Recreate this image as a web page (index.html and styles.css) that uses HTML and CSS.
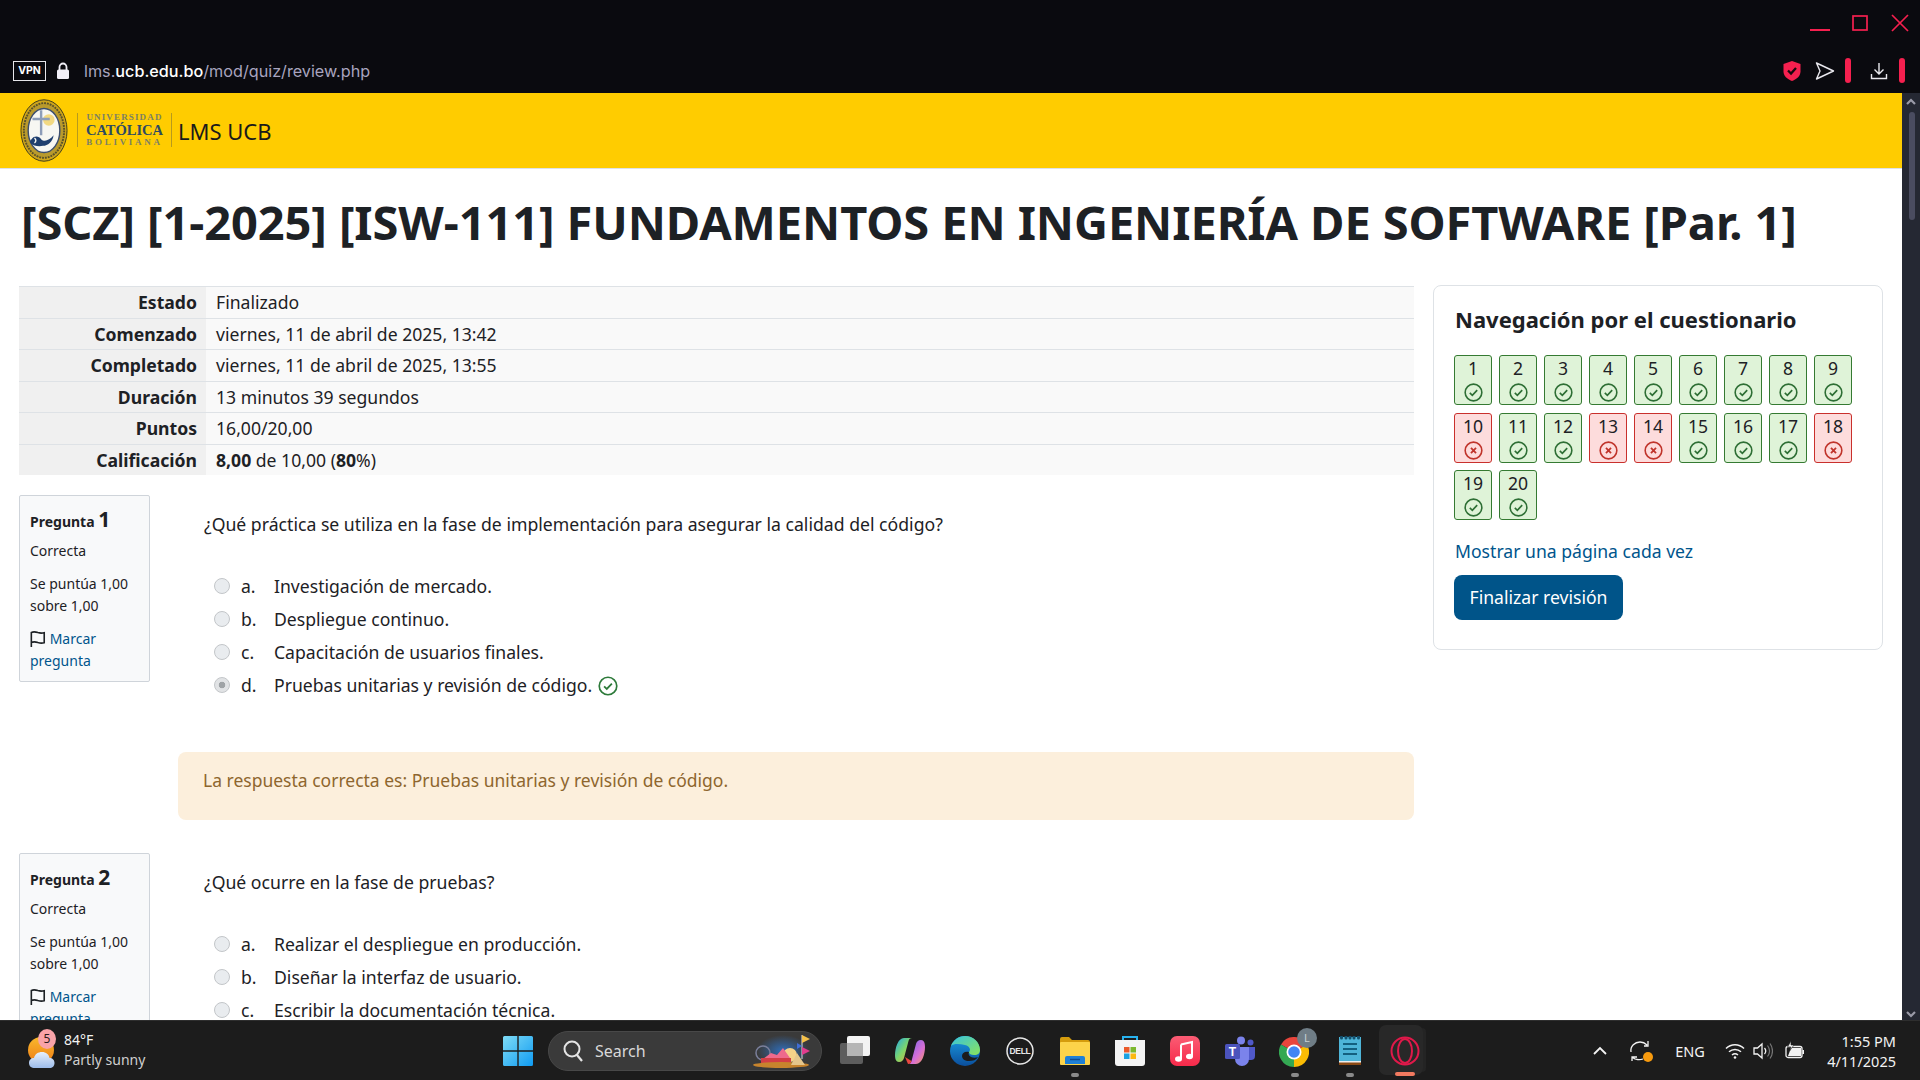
FILE: index.html
```html
<!DOCTYPE html>
<html lang="es">
<head>
<meta charset="utf-8">
<title>LMS UCB</title>
<link rel="stylesheet" href="styles.css">
</head>
<body>
<svg class="defs" width="0" height="0" aria-hidden="true">
  <symbol id="ok" viewBox="0 0 18 18"><circle cx="9" cy="9" r="7.9" fill="none" stroke="currentColor" stroke-width="1.5"/><path d="M5.5 9.3l2.4 2.3 4.6-4.8" fill="none" stroke="currentColor" stroke-width="1.6"/></symbol>
  <symbol id="bad" viewBox="0 0 18 18"><circle cx="9" cy="9" r="7.9" fill="none" stroke="currentColor" stroke-width="1.5"/><path d="M6.6 6.6l4.8 4.8M11.4 6.6l-4.8 4.8" fill="none" stroke="currentColor" stroke-width="1.7"/></symbol>
  <symbol id="flag" viewBox="0 0 18 20"><path d="M1.5 19V2.6c3-1.2 5-.6 7.4.2 2.3.7 4.300.9 7.100.1v11.300c-2.800.8-4.800.5-7.100-.2-2.400-.8-4.400-1.300-7.400-.1" fill="none" stroke="#1d2125" stroke-width="1.800"/></symbol>
</svg>

<header class="browser">
  <div class="winctl">
    <svg class="wc" width="20" height="20" viewBox="0 0 20 20"><path d="M0 17h20" stroke="#f5204f" stroke-width="2"/></svg>
    <svg class="wc" width="20" height="20" viewBox="0 0 20 20"><rect x="3" y="3" width="14" height="14" fill="none" stroke="#f5204f" stroke-width="1.700"/></svg>
    <svg class="wc" width="20" height="20" viewBox="0 0 20 20"><path d="M2 2l16 16M18 2L2 18" stroke="#f5204f" stroke-width="1.700"/></svg>
  </div>
  <div class="addr">
    <span class="vpn">VPN</span>
    <svg class="lock" width="14" height="18" viewBox="0 0 14 18"><path d="M3.500 8V5a3.500 3.500 0 0 1 7 0v3" fill="none" stroke="#f1eff7" stroke-width="1.800"/><rect x="1" y="7.500" width="12" height="9.500" rx="1.500" fill="#f1eff7"/></svg>
    <span class="url"><span class="dim">lms.</span>ucb.edu.bo<span class="dim">/mod/quiz/review.php</span></span>
    <div class="addr-tools">
      <svg width="20" height="22" viewBox="0 0 20 22"><path d="M10 1l8.500 3v7.500c0 4.500-3.500 7.500-8.500 9.500-5-2-8.500-5-8.500-9.500V4z" fill="#f5204f"/><path d="M6 10.500l3 3 5-5.500" fill="none" stroke="#16080d" stroke-width="2.300"/></svg>
      <svg class="send" width="20" height="20" viewBox="0 0 20 20"><path d="M1.500 2l17 8-17 8 3.500-8z" fill="none" stroke="#e9e8ee" stroke-width="1.400" stroke-linejoin="round"/></svg>
      <span class="rbar"></span>
      <svg class="dl" width="18" height="18" viewBox="0 0 18 18"><path d="M9 1v11M4.500 7.500L9 12l4.500-4.500M1.500 12v4.500h15V12" fill="none" stroke="#e9e8ee" stroke-width="1.400"/></svg>
      <span class="rbar last"></span>
    </div>
  </div>
</header>

<div class="viewport">
  <div class="page">
    <nav class="navbar">
      <svg class="crest" width="48" height="65" viewBox="0 0 50 66">
        <ellipse cx="25" cy="33" rx="24" ry="32" fill="#cda51b" stroke="#3c3a1c" stroke-width="1"/>
        <ellipse cx="25" cy="33" rx="21" ry="28.500" fill="#b99a2c" stroke="#58512a" stroke-width="2" stroke-dasharray="2 1"/>
        <ellipse cx="25" cy="33" rx="16.500" ry="23" fill="#f7f7f2" stroke="#3d4f6e" stroke-width="1.500"/>
        <circle cx="30" cy="22" r="6" fill="#f0cc52" opacity=".7"/>
        <path d="M22 12v26M13 21h18" stroke="#8d9db8" stroke-width="2.500"/>
        <path d="M12 42c3-4 8-3 10 0 3 3 8 2 13-4-1 7-6 11-11 11-5 1-10 0-13-3-1-2 0-3 1-4z" fill="#1f3f6e"/>
        <path d="M15 41c2 1 2 4 0 5" fill="none" stroke="#f7f7f2" stroke-width="1.500"/>
      </svg>
      <div class="logoword">
        <span class="l1">UNIVERSIDAD</span>
        <span class="l2">CATÓLICA</span>
        <span class="l3">BOLIVIANA</span>
      </div>
      <span class="brand">LMS UCB</span>
    </nav>

    <h1 class="title">[SCZ] [1-2025] [ISW-111] FUNDAMENTOS EN INGENIERÍA DE SOFTWARE [Par. 1]</h1>

    <div class="layout">
      <main class="maincol">
        <table class="summary">
          <tr><th>Estado</th><td>Finalizado</td></tr>
          <tr><th>Comenzado</th><td>viernes, 11 de abril de 2025, 13:42</td></tr>
          <tr><th>Completado</th><td>viernes, 11 de abril de 2025, 13:55</td></tr>
          <tr><th>Duración</th><td>13 minutos 39 segundos</td></tr>
          <tr><th>Puntos</th><td>16,00/20,00</td></tr>
          <tr><th>Calificación</th><td><b>8,00</b> de 10,00 (<b>80</b>%)</td></tr>
        </table>

        <section class="que">
          <aside class="info">
            <h3 class="qno">Pregunta <span>1</span></h3>
            <p class="state">Correcta</p>
            <p class="grade">Se puntúa 1,00 sobre 1,00</p>
            <p class="mark"><svg class="flag"><use href="#flag"/></svg> <a>Marcar pregunta</a></p>
          </aside>
          <div class="qbody">
            <p class="qtext">¿Qué práctica se utiliza en la fase de implementación para asegurar la calidad del código?</p>
            <ul class="answers">
              <li><span class="radio"></span><span class="let">a.</span>Investigación de mercado.</li>
              <li><span class="radio"></span><span class="let">b.</span>Despliegue continuo.</li>
              <li><span class="radio"></span><span class="let">c.</span>Capacitación de usuarios finales.</li>
              <li><span class="radio on"></span><span class="let">d.</span>Pruebas unitarias y revisión de código.<svg class="tick"><use href="#ok"/></svg></li>
            </ul>
            <div class="feedback">La respuesta correcta es: Pruebas unitarias y revisión de código.</div>
          </div>
        </section>

        <section class="que">
          <aside class="info">
            <h3 class="qno">Pregunta <span>2</span></h3>
            <p class="state">Correcta</p>
            <p class="grade">Se puntúa 1,00 sobre 1,00</p>
            <p class="mark"><svg class="flag"><use href="#flag"/></svg> <a>Marcar pregunta</a></p>
          </aside>
          <div class="qbody">
            <p class="qtext">¿Qué ocurre en la fase de pruebas?</p>
            <ul class="answers">
              <li><span class="radio"></span><span class="let">a.</span>Realizar el despliegue en producción.</li>
              <li><span class="radio"></span><span class="let">b.</span>Diseñar la interfaz de usuario.</li>
              <li><span class="radio"></span><span class="let">c.</span>Escribir la documentación técnica.</li>
            </ul>
          </div>
        </section>
      </main>

      <aside class="navblock">
        <h2 class="navtitle">Navegación por el cuestionario</h2>
        <div class="qgrid">
          <a class="qb"><span>1</span><svg><use href="#ok"/></svg></a>
          <a class="qb"><span>2</span><svg><use href="#ok"/></svg></a>
          <a class="qb"><span>3</span><svg><use href="#ok"/></svg></a>
          <a class="qb"><span>4</span><svg><use href="#ok"/></svg></a>
          <a class="qb"><span>5</span><svg><use href="#ok"/></svg></a>
          <a class="qb"><span>6</span><svg><use href="#ok"/></svg></a>
          <a class="qb"><span>7</span><svg><use href="#ok"/></svg></a>
          <a class="qb"><span>8</span><svg><use href="#ok"/></svg></a>
          <a class="qb"><span>9</span><svg><use href="#ok"/></svg></a>
          <a class="qb wrong"><span>10</span><svg><use href="#bad"/></svg></a>
          <a class="qb"><span>11</span><svg><use href="#ok"/></svg></a>
          <a class="qb"><span>12</span><svg><use href="#ok"/></svg></a>
          <a class="qb wrong"><span>13</span><svg><use href="#bad"/></svg></a>
          <a class="qb wrong"><span>14</span><svg><use href="#bad"/></svg></a>
          <a class="qb"><span>15</span><svg><use href="#ok"/></svg></a>
          <a class="qb"><span>16</span><svg><use href="#ok"/></svg></a>
          <a class="qb"><span>17</span><svg><use href="#ok"/></svg></a>
          <a class="qb wrong"><span>18</span><svg><use href="#bad"/></svg></a>
          <a class="qb"><span>19</span><svg><use href="#ok"/></svg></a>
          <a class="qb"><span>20</span><svg><use href="#ok"/></svg></a>
        </div>
        <a class="onepage">Mostrar una página cada vez</a>
        <a class="finish">Finalizar revisión</a>
      </aside>
    </div>
  </div>
  <div class="scrollbar">
    <svg class="sarrow" width="10" height="8" viewBox="0 0 10 8"><path d="M1 6l4-4 4 4" fill="none" stroke="#9a9aa8" stroke-width="2.200"/></svg>
    <span class="thumb"></span>
    <svg class="sarrow down" width="10" height="8" viewBox="0 0 10 8"><path d="M1 2l4 4 4-4" fill="none" stroke="#9a9aa8" stroke-width="2.200"/></svg>
  </div>
</div>

<footer class="taskbar">
  <div class="weather">
    <div class="wicon">
      <svg width="32" height="36" viewBox="0 0 32 36">
        <defs><linearGradient id="sun" x1="0" y1="0" x2="0" y2="1"><stop offset="0" stop-color="#f9b92c"/><stop offset="1" stop-color="#ee7d16"/></linearGradient>
        <linearGradient id="cl" x1="0" y1="0" x2="0" y2="1"><stop offset="0" stop-color="#e8f0fb"/><stop offset="1" stop-color="#9dbcea"/></linearGradient></defs>
        <circle cx="14" cy="16" r="13" fill="url(#sun)"/>
        <path d="M8 34c-4 0-6-2-6-5s2-5 5-5c1-4 4-6 8-6s7 2.500 7.500 6c3 0 5 2 5 5s-2 5-5 5z" fill="url(#cl)"/>
      </svg>
      <span class="wbadge">5</span>
    </div>
    <div class="wtext"><span>84°F</span><span class="sub">Partly sunny</span></div>
  </div>

  <div class="centre">
    <span class="tk">
      <svg width="30" height="30" viewBox="0 0 30 30"><defs><linearGradient id="w" x1="0" y1="0" x2="1" y2="1"><stop offset="0" stop-color="#7fdcf6"/><stop offset="1" stop-color="#0f9bf2"/></linearGradient></defs><path d="M0 1.500A1.500 1.500 0 0 1 1.500 0h12.800v14.300H0zM15.700 0h12.800A1.500 1.500 0 0 1 30 1.500v12.800H15.700zM0 15.700h14.300V30H1.500A1.500 1.500 0 0 1 0 28.500zM15.700 15.700H30v12.800a1.500 1.500 0 0 1-1.500 1.500H15.700z" fill="url(#w)"/></svg>
    </span>
    <div class="search">
      <svg width="22" height="24" viewBox="0 0 22 24"><circle cx="10" cy="10" r="7.500" fill="none" stroke="#e4e4e4" stroke-width="2"/><path d="M15 16l5 6" stroke="#e4e4e4" stroke-width="2.200"/></svg>
      <span>Search</span>
      <svg class="fair" width="66" height="36" viewBox="0 0 66 36">
        <defs><radialGradient id="sky"><stop offset="0" stop-color="#2f6db8"/><stop offset="1" stop-color="#3a3a3a"/></radialGradient></defs>
        <ellipse cx="32" cy="18" rx="26" ry="16" fill="url(#sky)"/>
        <circle cx="12" cy="20" r="7" fill="none" stroke="#7a7f9a" stroke-width="1.500"/>
        <circle cx="39" cy="22" r="7" fill="#f6d289"/>
        <path d="M12 26l8-6 6 2 6-7 7 10z" fill="#ee6a8c"/>
        <rect x="10" y="25" width="30" height="6" fill="#d33e46"/>
        <ellipse cx="30" cy="32" rx="28" ry="3" fill="#c7842d"/>
        <path d="M40 32l6-12 8 12z" fill="#e5c68c"/>
        <path d="M51 2v24" stroke="#ddd" stroke-width="1"/>
        <path d="M51 2l8 4-8 4z" fill="#f4c04a"/><path d="M51 14l8 4-8 4z" fill="#e23c8e"/><path d="M46 10l5 3-5 3z" fill="#3f6dd7"/>
      </svg>
    </div>
    <span class="tk">
      <svg width="30" height="30" viewBox="0 0 30 30"><rect x="0" y="7" width="23" height="21" rx="2" fill="#5d5d5d"/><rect x="7" y="0" width="23" height="20" rx="2" fill="#f3f3f3"/><rect x="7" y="7" width="16" height="13" fill="#b5b5b5"/></svg>
    </span>
    <span class="tk">
      <svg width="30" height="30" viewBox="0 0 30 30"><defs><linearGradient id="cp1" x1="0" y1="0" x2="1" y2="1"><stop offset="0" stop-color="#1fa8ea"/><stop offset=".5" stop-color="#7ed66a"/><stop offset="1" stop-color="#f6a83c"/></linearGradient><linearGradient id="cp2" x1="0" y1="0" x2="1" y2="1"><stop offset="0" stop-color="#6f62ec"/><stop offset=".6" stop-color="#d66fd6"/><stop offset="1" stop-color="#f79a5d"/></linearGradient></defs><path d="M9 2h8c-2 0-3 1-3.500 3L9 22c-.6 2-2 4-5 4-3 0-4-3-4-7C0 12 3 2 9 2z" fill="url(#cp1)"/><path d="M21 28h-8c2 0 3-1 3.500-3L21 8c.6-2 2-4 5-4 3 0 4 3 4 7 0 7-3 17-9 17z" fill="url(#cp2)"/><path d="M10 21l3 7c2 0 3-1 3.500-3z" fill="#e8473f"/></svg>
    </span>
    <span class="tk">
      <svg width="30" height="30" viewBox="0 0 30 30"><defs><linearGradient id="e1" x1="0" y1="0" x2="1" y2="1"><stop offset="0" stop-color="#36c3e0"/><stop offset="1" stop-color="#8be35a"/></linearGradient><linearGradient id="e2" x1="0" y1="0" x2="0" y2="1"><stop offset="0" stop-color="#1b9de2"/><stop offset="1" stop-color="#0b4f9d"/></linearGradient></defs><circle cx="15" cy="15" r="15" fill="url(#e2)"/><path d="M1 10C3 4 9 0 15 0c8 0 15 6 15 14 0 3-2 5-6 5-3 0-5-1-5-3 2-2 1-6-4-7C10 8 4 7 1 10z" fill="url(#e1)"/><path d="M19 16c-4-1-7 1-7 4s3 5 7 5c4 0 7-1 9-4-2 1-5 1-7 0-2-1-3-3-2-5z" fill="#1c1c1c"/></svg>
    </span>
    <span class="tk">
      <svg width="28" height="28" viewBox="0 0 28 28"><circle cx="14" cy="14" r="13" fill="none" stroke="#e6e6e6" stroke-width="1.500"/><text x="14" y="17" text-anchor="middle" class="delltxt">DELL</text></svg>
    </span>
    <span class="tk running">
      <svg width="30" height="28" viewBox="0 0 30 28"><path d="M0 2a2 2 0 0 1 2-2h7l3 3h16a2 2 0 0 1 2 2v3H0z" fill="#d59c0d"/><rect y="5" width="30" height="23" rx="1" fill="#fcd34a"/><path d="M5 27v-6a2 2 0 0 1 2-2h16a2 2 0 0 1 2 2v6z" fill="#1f80d6"/><path d="M10 22.500h10" stroke="#0d4c94" stroke-width="1.500"/></svg>
    </span>
    <span class="tk">
      <svg width="30" height="32" viewBox="0 0 30 32"><path d="M8 6V2h14v4" fill="none" stroke="#27b2ee" stroke-width="2"/><path d="M0 5h30v23a3 3 0 0 1-3 3H3a3 3 0 0 1-3-3z" fill="#f4f4f4"/><rect x="9" y="12" width="5.500" height="5.500" fill="#ea5a2a"/><rect x="15.500" y="12" width="5.500" height="5.500" fill="#7cb82f"/><rect x="9" y="18.500" width="5.500" height="5.500" fill="#1ba1e2"/><rect x="15.500" y="18.500" width="5.500" height="5.500" fill="#fbb812"/></svg>
    </span>
    <span class="tk">
      <svg width="30" height="30" viewBox="0 0 30 30"><defs><linearGradient id="m" x1="0" y1="0" x2="0" y2="1"><stop offset="0" stop-color="#fb5c74"/><stop offset="1" stop-color="#f62a4a"/></linearGradient></defs><rect width="30" height="30" rx="7" fill="url(#m)"/><path d="M11 8.500l11-2.500v14.500M11 8.500V23" fill="none" stroke="#fff" stroke-width="2"/><ellipse cx="8.500" cy="23" rx="3.500" ry="2.800" fill="#fff"/><ellipse cx="19.500" cy="20.500" rx="3.500" ry="2.800" fill="#fff"/></svg>
    </span>
    <span class="tk">
      <svg width="30" height="30" viewBox="0 0 30 30"><circle cx="16" cy="4.500" r="4" fill="#7b83eb"/><circle cx="25.500" cy="6.500" r="3" fill="#5059c9"/><path d="M22 11h8v9c0 3-2 4-4 4h-4z" fill="#5059c9"/><path d="M8 11h16v12a7 7 0 0 1-14 0z" fill="#7b83eb"/><rect y="8" width="15" height="15" rx="1.500" fill="#4b53bc"/><text x="7.500" y="19.500" text-anchor="middle" class="teamstxt">T</text></svg>
    </span>
    <span class="tk running">
      <svg class="chrome" width="30" height="30" viewBox="0 0 30 30"><path d="M15 15L2 7.500A15 15 0 0 1 28 7.500z" fill="#e8453c"/><path d="M15 15L28 7.500A15 15 0 0 1 15 30z" fill="#fbbc04"/><path d="M15 15L15 30A15 15 0 0 1 2 7.500z" fill="#34a853"/><circle cx="15" cy="15" r="7.500" fill="#fff"/><circle cx="15" cy="15" r="5.800" fill="#4285f4"/></svg>
      <span class="pbadge">L</span>
    </span>
    <span class="tk running">
      <svg width="22" height="30" viewBox="0 0 22 30"><rect y="1" width="22" height="26" fill="#4eb5d8"/><rect y="26" width="22" height="3" fill="#8a4a16"/><rect y="25" width="22" height="1.500" fill="#eee"/><path d="M2.500 1v1M7 1v1M11 1v1M15 1v1M19.500 1v1" stroke="#14506e" stroke-width="3" stroke-linecap="round"/><path d="M4 8h14M4 13h14M4 18h14" stroke="#14607f" stroke-width="2"/></svg>
    </span>
    <span class="tk opera">
      <svg width="30" height="30" viewBox="0 0 30 30"><circle cx="15" cy="15" r="13.500" fill="none" stroke="#e0194a" stroke-width="2"/><ellipse cx="15" cy="15" rx="7" ry="12" fill="none" stroke="#e0194a" stroke-width="2"/></svg>
    </span>
  </div>

  <div class="tray">
    <svg class="t-chev" width="14" height="10" viewBox="0 0 14 10"><path d="M1 8l6-6 6 6" fill="none" stroke="#f3f3f3" stroke-width="1.800"/></svg>
    <span class="t-sync">
      <svg width="22" height="24" viewBox="0 0 22 24"><path d="M2 13c-1-6 4-10 9-10 3 0 5 1 7 3M15 7h4V2M8 18H3v4M3 18c3 3 8 3 11 2" fill="none" stroke="#f3f3f3" stroke-width="1.300"/></svg>
      <i class="dot"></i>
    </span>
    <span class="t-lang">ENG</span>
    <svg class="t-wifi" width="20" height="16" viewBox="0 0 20 16"><path d="M1 5.500c5-5 13-5 18 0M4 8.800c3.500-3.200 8.500-3.200 12 0M7 12c1.800-1.500 4.200-1.500 6 0" fill="none" stroke="#f3f3f3" stroke-width="1.500"/><circle cx="10" cy="14.500" r="1.300" fill="#f3f3f3"/></svg>
    <svg class="t-vol" width="20" height="18" viewBox="0 0 20 18"><path d="M1 6h3.500L9 2v14l-4.500-4H1z" fill="none" stroke="#f3f3f3" stroke-width="1.300"/><path d="M11.500 6c1.500 1.800 1.500 4.200 0 6" fill="none" stroke="#f3f3f3" stroke-width="1.300"/><path d="M14.500 3.500c2.500 3.300 2.500 7.700 0 11M17 1.500c3.300 4.500 3.300 10.500 0 15" fill="none" stroke="#777" stroke-width="1.200"/></svg>
    <svg class="t-bat" width="20" height="20" viewBox="0 0 20 20"><rect x="1" y="5.500" width="16" height="11" rx="2" fill="none" stroke="#f3f3f3" stroke-width="1.300"/><path d="M17.500 9h1.500v4h-1.500z" fill="#f3f3f3"/><path d="M3 15l3-8h10v8z" fill="#f3f3f3"/><path d="M6 0L2.500 6H6l-1.500 4L9 4H6z" fill="#f3f3f3" stroke="#1c1c1c" stroke-width=".6"/></svg>
    <div class="clock"><span>1:55 PM</span><span>4/11/2025</span></div>
  </div>
</footer>
</body>
</html>
```

FILE: styles.css
```css
* { box-sizing: border-box; }
html, body { height: 100%; }
body {
  margin: 0;
  height: 100vh;
  overflow: hidden;
  display: flex;
  flex-direction: column;
  font-family: "Noto Sans", "Open Sans", sans-serif;
  color: #1d2125;
  background: #fff;
}
.defs { position: absolute; }
p, h1, h2, h3, ul { margin: 0; padding: 0; }

/* browser chrome */
.browser { height: 93px; flex: none; background: #0a0a0f; display: flex; flex-direction: column; }
.winctl { height: 58px; display: flex; justify-content: flex-end; padding: 13px 10px 0 0; gap: 20px; align-items: flex-start; }
.addr { height: 35px; display: flex; align-items: center; padding: 0 15px 10px 13px; }
.vpn {
  width: 33px; height: 20px; border: 1px solid #e6e6ea;
  color: #fff; font: 700 10.500px/18px "Inter", sans-serif; text-align: center;
}
.lock { margin-left: 10px; }
.url { margin-left: 14px; font: 500 16.200px/20px "Inter", sans-serif; color: #fff; }
.dim { color: #a8a4bf; font-weight: 400; }
.addr-tools { margin-left: auto; display: flex; align-items: center; }
.send { margin-left: 13px; }
.rbar { width: 6px; height: 25px; border-radius: 3px; background: #f5204f; margin-left: 10px; }
.dl { margin-left: 19px; }
.rbar.last { margin-left: 11px; }

/* viewport */
.viewport { flex: 1; min-height: 0; display: flex; }
.page { flex: 1; min-width: 0; overflow: hidden; }
.scrollbar { width: 18px; flex: none; background: #252833; display: flex; flex-direction: column; align-items: center; padding-top: 5px; }
.sarrow { flex: none; }
.thumb { width: 6px; height: 108px; background: #4a4c60; border-radius: 3px; margin-top: 6px; margin-left: 1px; }
.sarrow.down { margin-top: auto; margin-bottom: 2px; }

.navbar {
  height: 76px; background: #ffcc00; border-bottom: 1px solid #dee2e6;
  display: flex; align-items: center; padding: 0 0 1px 20px;
}
.crest { flex: none; }
.logoword {
  margin-left: 9px; flex: none;
  border-left: 1px solid #b79a1d; border-right: 1px solid #b79a1d;
  height: 34px; width: 95px; display: flex; flex-direction: column; justify-content: center; align-items: center;
  font-family: "Liberation Serif", serif; color: #7c8064; line-height: 1;
}
.l1 { font-size: 9px; font-weight: 700; letter-spacing: 1.150px; line-height: 11px; }
.l2 { font-size: 14.500px; font-weight: 700; color: #2d4a62; line-height: 14px; }
.l3 { font-size: 9px; font-weight: 700; letter-spacing: 2.700px; line-height: 11px; }
.brand { margin-left: 6px; font-size: 22px; line-height: 30px; color: #1a1a1a; padding-top: 1px; }

.title { margin: 24px 0 0 21px; font-size: 47px; line-height: 58px; font-weight: 700; color: #1d2125; white-space: nowrap; letter-spacing: -.1px; }

.layout { display: flex; align-items: flex-start; padding: 35px 20px 0 19px; gap: 19px; }
.maincol { width: 1395px; flex: none; }
.navblock {
  width: 450px; flex: none; height: 365px; margin-top: -1px; border: 1px solid #dee2e6; border-radius: 8px; padding: 17px 20px 0 21px;
  display: flex; flex-direction: column; align-items: flex-start;
}

/* summary */
.summary { width: 100%; height: 189px; border-collapse: collapse; font-size: 17.600px; line-height: 30px; }
.summary th, .summary td { padding: 0; border-top: 1px solid #dee2e6; }
.summary th { width: 187px; background: #f0f0f0; text-align: right; padding-right: 9px; font-weight: 700; }
.summary td { background: #f9f9f9; padding-left: 10px; }
.summary b { font-weight: 700; }

/* question */
.que { display: flex; gap: 28px; margin-top: 20px; margin-bottom: 33px; }
.info {
  width: 131px; height: 187px; flex: none; background: #f8f9fa; border: 1px solid #cfd4da; border-radius: 2px;
  padding: 8px 10px 0 10px; font-size: 14px; line-height: 22px;
}
.qno { font-size: 14px; font-weight: 700; line-height: 30px; }
.qno span { font-size: 21px; }
.state { margin-top: 3px; }
.grade { margin-top: 11px; }
.mark { margin-top: 11px; }
.mark a { color: #00558c; }
.flag { width: 16px; height: 20px; vertical-align: -5px; }
.qbody { width: 1236px; flex: none; }
.qtext { padding: 16px 0 0 26px; font-size: 17.650px; line-height: 27px; height: 75px; }
.answers { list-style: none; padding-left: 36px; font-size: 17.600px; line-height: 33px; }
.answers li { display: flex; align-items: center; height: 33px; }
.radio { width: 16px; height: 16px; border-radius: 50%; background: #e9ecef; border: 1.500px solid #c3c6c9; margin-right: 12px; flex: none; margin-top: -2px; }
.radio.on { background: radial-gradient(circle, #9fa3a6 0 3px, #e1e3e5 3.600px); }
.let { width: 33px; flex: none; margin-left: -1px; }
.tick { width: 20px; height: 20px; color: #2d7a3a; margin-left: 6px; }
.feedback {
  margin-top: 50px; height: 68px; background: #fcefdc; border-radius: 8px;
  color: #8e662e; font-size: 17.500px; line-height: 27px; padding: 15px 25px 0;
}

/* navigation block */
.navtitle { font-size: 22px; line-height: 32px; font-weight: 700; color: #1d2125; }
.qgrid { display: grid; grid-template-columns: repeat(9, 38px); column-gap: 7px; row-gap: 7.500px; margin-top: 20px; margin-left: -1px; }
.qb {
  height: 50px; border: 1px solid #357a32; border-radius: 3px; background: #dff3d8;
  display: flex; flex-direction: column; align-items: center;
}
.qb span { color: #1d2125; font-size: 17.600px; line-height: 24px; height: 24px; }
.qb svg { width: 19px; height: 19px; margin-top: 3px; color: #2e6f35; }
.qb.wrong { background: #fddcdc; border-color: #c9302c; }
.qb.wrong svg { color: #c0342b; }
.onepage { margin-top: 18px; color: #00558c; font-size: 17.600px; line-height: 27px; }
.finish {
  margin-top: 10px; margin-left: -1px; width: 169px; height: 45px; background: #005489; color: #fff; border-radius: 8px;
  font-size: 17.600px; line-height: 44px; text-align: center;
}

/* taskbar */
.taskbar {
  height: 60px; flex: none; background: #1c1c1c; border-top: 1px solid #2e2e2e;
  display: flex; align-items: center; color: #f3f3f3; font-family: "Noto Sans", sans-serif;
}
.weather { width: 490px; flex: none; display: flex; align-items: center; padding-left: 27px; }
.wicon { position: relative; width: 37px; height: 36px; margin-top: 2px; }
.wbadge {
  position: absolute; left: 11px; top: -5px; width: 18px; height: 20px; border-radius: 50%;
  background: #f9a3a8; color: #2a1a1a; font-size: 12px; line-height: 20px; text-align: center;
}
.wtext { display: flex; flex-direction: column; font-size: 14px; line-height: 20px; margin-top: -1px; }
.wtext .sub { color: #cfcfcf; }
.centre { display: flex; align-items: center; height: 100%; }
.tk { position: relative; width: 55px; height: 100%; flex: none; display: flex; align-items: center; justify-content: center; }
.tk.running::after {
  content: ""; position: absolute; bottom: 3px; left: 50%; width: 8px; height: 4px; margin-left: -4px; border-radius: 2px; background: #8a8a8a;
}
.tk.opera::before {
  content: ""; position: absolute; left: 2px; top: 4px; width: 44px; height: 50px; border-radius: 7px;
  background: #282828; box-shadow: 6px 0 0 -3px #242424;
}
.tk.opera svg { position: relative; }
.tk.opera::after { content: ""; position: absolute; bottom: 4px; left: 50%; width: 20px; height: 4px; margin-left: -10px; border-radius: 2px; background: #f27a60; }
.delltxt { font: 700 8.500px "Liberation Sans", sans-serif; fill: #e6e6e6; letter-spacing: -.3px; }
.teamstxt { font: 700 12px "Liberation Sans", sans-serif; fill: #fff; }
.chrome { margin: 3px 0 0 -2px; }
.pbadge {
  position: absolute; top: 7px; right: 5px; width: 20px; height: 20px; border-radius: 50%;
  background: #6f7d86; color: #c7cfd4; font-size: 11px; line-height: 20px; text-align: center;
}
.search {
  width: 274px; height: 40px; margin: 0 5px 0 3px; flex: none; border-radius: 20px; background: #3a3a3a; border: 1px solid #484848;
  display: flex; align-items: center; padding-left: 13px; font-size: 16px; color: #d8d8d8;
}
.search span { margin-left: 11px; }
.fair { margin-left: auto; margin-right: 4px; }
.tray { margin-left: auto; display: flex; align-items: center; padding-right: 24px; }
.t-chev { flex: none; }
.t-sync { position: relative; margin-left: 22px; width: 22px; height: 24px; }
.dot { position: absolute; right: -2px; bottom: 1px; width: 10px; height: 10px; border-radius: 50%; background: #f79a0e; }
.t-lang { margin-left: 24px; font-size: 14.500px; width: 30px; }
.t-wifi { margin-left: 20px; }
.t-vol { margin-left: 8px; }
.t-bat { margin-left: 12px; }
.clock { margin-left: 22px; display: flex; flex-direction: column; align-items: flex-end; font-size: 14.500px; line-height: 20px; }
```
